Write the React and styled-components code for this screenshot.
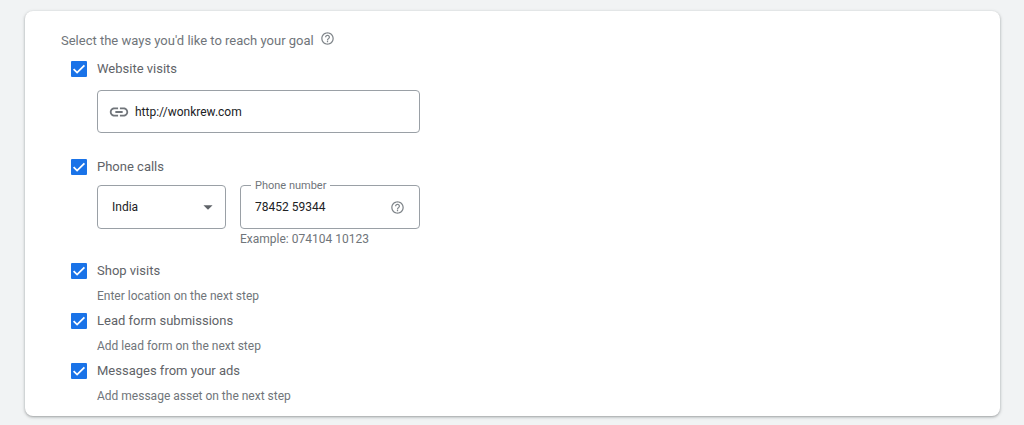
import styled, { createGlobalStyle } from 'styled-components';
import { useState } from 'react';
import { MdArrowDropDown, MdHelpOutline, MdLink } from 'react-icons/md';

const GlobalStyle = createGlobalStyle`
    * {
        box-sizing: border-box;
    }

    body {
        margin: 0;
        background-color: #f1f3f4;
        font-family: Roboto, "Liberation Sans", sans-serif;
        color: #5f6368;
    }
`;

const Page = styled.main`
    padding: 11px 24px 9px 25px;
`;

const Card = styled.section`
    padding: 20px 36px 12px;
    background-color: #ffffff;
    border-radius: 8px;
    box-shadow: 0 1px 2px rgba(60, 64, 67, 0.3), 0 1px 3px 1px rgba(60, 64, 67, 0.15);
`;

const Heading = styled.div`
    display: flex;
    align-items: flex-start;
    gap: 6px;
    margin-bottom: 8px;
`;

const Title = styled.h2`
    margin: 0;
    font-size: 13px;
    font-weight: 400;
    line-height: 20px;
    color: #70757a;
`;

const HelpButton = styled.button`
    display: flex;
    flex: none;
    padding: 0;
    background: none;
    border: none;
    color: #80868b;
    cursor: pointer;
`;

const HelpIcon = styled(MdHelpOutline)`
    width: 15px;
    height: 15px;
`;

const Options = styled.div`
    display: flex;
    flex-direction: column;
    padding-left: 10px;
`;

const Option = styled.div`
    padding-bottom: ${props => props.$space};
`;

const OptionLabel = styled.label`
    display: flex;
    align-items: center;
    gap: 10px;
    width: fit-content;
    font-size: 13px;
    line-height: 20px;
    cursor: pointer;
`;

const CheckboxBox = styled.span`
    display: grid;
    width: 16px;
    height: 16px;

    > * {
        grid-area: 1 / 1;
    }
`;

const CheckboxInput = styled.input`
    appearance: none;
    width: 16px;
    height: 16px;
    margin: 0;
    border: 2px solid #5f6368;
    border-radius: 1px;
    cursor: pointer;

    &:checked {
        background-color: #1a73e8;
        border-color: #1a73e8;
    }
`;

const CheckMark = styled.svg`
    width: 16px;
    height: 16px;
    fill: none;
    stroke: #ffffff;
    stroke-width: 1.8;
    pointer-events: none;
`;

const OptionBody = styled.div`
    padding-left: 26px;
    padding-top: ${props => props.$top};
`;

const Note = styled.p`
    margin: 0;
    font-size: 12px;
    line-height: 16px;
    color: #70757a;
`;

const FieldRow = styled.div`
    display: flex;
    gap: 14px;
    max-width: 323px;
`;

const Field = styled.div`
    position: relative;
    display: flex;
    align-items: center;
    flex: ${props => props.$flex || '1'};
    min-width: 0;
    height: ${props => props.$height || '44px'};
    padding: 0 14px;
    border: 1px solid #9aa0a6;
    border-radius: 4px;
`;

const FloatingLabel = styled.label`
    position: absolute;
    top: -8px;
    left: 10px;
    padding: 0 4px;
    background-color: #ffffff;
    font-size: 11px;
    line-height: 16px;
    color: #70757a;
`;

const TextInput = styled.input`
    flex: 1;
    min-width: 0;
    padding: 0;
    background: none;
    border: none;
    outline: none;
    font-family: inherit;
    font-size: 12px;
    line-height: 16px;
    color: #202124;
`;

const LinkIcon = styled(MdLink)`
    flex: none;
    width: 22px;
    height: 22px;
    margin: 0 5px 0 -4px;
    color: #70757a;
`;

const CountrySelect = styled.select`
    appearance: none;
    flex: 1;
    min-width: 0;
    padding: 0;
    background: none;
    border: none;
    outline: none;
    font-family: inherit;
    font-size: 12px;
    line-height: 16px;
    color: #202124;
`;

const DropIcon = styled(MdArrowDropDown)`
    flex: none;
    width: 22px;
    height: 22px;
    margin-right: -8px;
    pointer-events: none;
`;

const FieldHint = styled(Note)`
    padding: 2px 0 0 143px;
`;

const Checkbox = ({ label }) => {
    const [checked, setChecked] = useState(true);

    return (
        <OptionLabel>
            <CheckboxBox>
                <CheckboxInput
                    type="checkbox"
                    checked={checked}
                    onChange={() => setChecked(!checked)}
                />
                {checked &&
                    <CheckMark viewBox="0 0 16 16" aria-hidden="true">
                        <path d="M2.6 8.2 6.1 11.6 13.4 4.3" />
                    </CheckMark>
                }
            </CheckboxBox>
            {label}
        </OptionLabel>
    )
}

const App = () => {
    const [url, setUrl] = useState("http://wonkrew.com");
    const [phone, setPhone] = useState("78452 59344");

    return (
        <Page>
            <GlobalStyle />
            <Card>
                <Heading>
                    <Title>Select the ways you'd like to reach your goal</Title>
                    <HelpButton type="button" aria-label="Help with goals">
                        <HelpIcon />
                    </HelpButton>
                </Heading>
                <Options>
                    <Option $space="24px">
                        <Checkbox label="Website visits" />
                        <OptionBody $top="11px">
                            <FieldRow>
                                <Field $height="43px">
                                    <LinkIcon />
                                    <TextInput
                                        type="url"
                                        aria-label="Website"
                                        value={url}
                                        onChange={e => setUrl(e.target.value)}
                                    />
                                </Field>
                            </FieldRow>
                        </OptionBody>
                    </Option>
                    <Option $space="14px">
                        <Checkbox label="Phone calls" />
                        <OptionBody $top="8px">
                            <FieldRow>
                                <Field $flex="0 0 129px">
                                    <CountrySelect aria-label="Country" defaultValue="India">
                                        <option>India</option>
                                    </CountrySelect>
                                    <DropIcon />
                                </Field>
                                <Field>
                                    <FloatingLabel htmlFor="phone">Phone number</FloatingLabel>
                                    <TextInput
                                        id="phone"
                                        type="tel"
                                        value={phone}
                                        onChange={e => setPhone(e.target.value)}
                                    />
                                    <HelpButton type="button" aria-label="Help with phone number">
                                        <HelpIcon />
                                    </HelpButton>
                                </Field>
                            </FieldRow>
                            <FieldHint>Example: 074104 10123</FieldHint>
                        </OptionBody>
                    </Option>
                    <Option $space="7px">
                        <Checkbox label="Shop visits" />
                        <OptionBody $top="7px">
                            <Note>Enter location on the next step</Note>
                        </OptionBody>
                    </Option>
                    <Option $space="7px">
                        <Checkbox label="Lead form submissions" />
                        <OptionBody $top="7px">
                            <Note>Add lead form on the next step</Note>
                        </OptionBody>
                    </Option>
                    <Option $space="0">
                        <Checkbox label="Messages from your ads" />
                        <OptionBody $top="7px">
                            <Note>Add message asset on the next step</Note>
                        </OptionBody>
                    </Option>
                </Options>
            </Card>
        </Page>
    )
}

export default App;
